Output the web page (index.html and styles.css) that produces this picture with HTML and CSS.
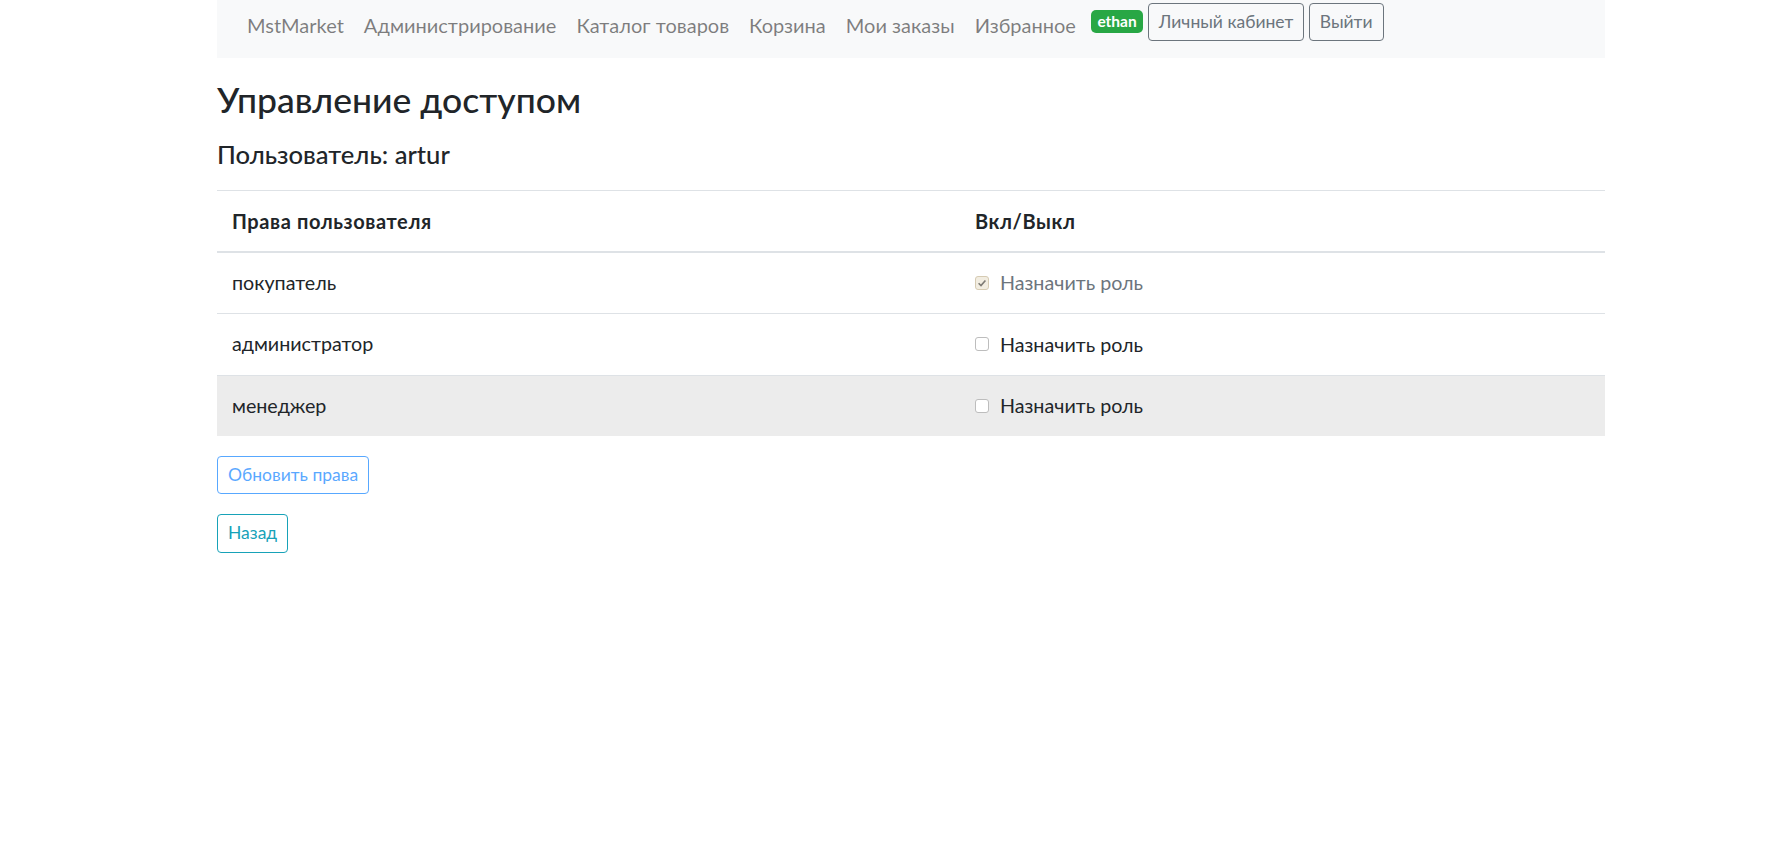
FILE: index.html
```html
<!DOCTYPE html>
<html lang="ru">
<head>
<meta charset="utf-8">
<title>Управление доступом</title>
<link rel="stylesheet" href="styles.css">
</head>
<body>
<div class="page">
  <nav class="navbar">
    <a class="nav-link" href="#">MstMarket</a>
    <a class="nav-link" href="#">Администрирование</a>
    <a class="nav-link" href="#">Каталог товаров</a>
    <a class="nav-link" href="#">Корзина</a>
    <a class="nav-link" href="#">Мои заказы</a>
    <a class="nav-link" href="#">Избранное</a>
    <span class="badge">ethan</span>
    <a class="btn btn-sm btn-outline-secondary" href="#">Личный кабинет</a>
    <a class="btn btn-sm btn-outline-secondary" href="#">Выйти</a>
  </nav>
  <main class="content">
    <h2 class="title">Управление доступом</h2>
    <h4 class="subtitle">Пользователь: artur</h4>
    <form class="roles-form">
      <table class="table">
        <thead>
          <tr><th class="col-name">Права пользователя</th><th>Вкл/Выкл</th></tr>
        </thead>
        <tbody>
          <tr>
            <td>покупатель</td>
            <td><label class="check disabled"><span class="box checked"><svg viewBox="0 0 14 14" width="14" height="14"><path d="M3.6 7.2 L6 9.6 L10.4 4.4" fill="none" stroke="#7d7a74" stroke-width="1.6"/></svg></span>Назначить роль</label></td>
          </tr>
          <tr>
            <td>администратор</td>
            <td><label class="check"><span class="box"></span>Назначить роль</label></td>
          </tr>
          <tr class="hover">
            <td>менеджер</td>
            <td><label class="check"><span class="box"></span>Назначить роль</label></td>
          </tr>
        </tbody>
      </table>
      <button class="btn btn-sm btn-outline-primary" type="button" disabled>Обновить права</button>
    </form>
    <a class="btn btn-sm btn-outline-info" href="#">Назад</a>
  </main>
</div>
</body>
</html>
```

FILE: styles.css
```css
* { box-sizing: border-box; }
body {
  margin: 0;
  font-family: "Lato", "Open Sans", sans-serif;
  font-size: 19.7px;
  line-height: 30px;
  color: #212529;
  background: #fff;
}
.page {
  margin-left: 217px;
  width: 1388px;
}
.navbar {
  display: flex;
  align-items: flex-start;
  height: 57.6px;
  padding: 0 20px;
  background: #f8f9fa;
}
.nav-link {
  padding: 10px 10px 0;
  font-size: 20px;
  color: rgba(0,0,0,.5);
  text-decoration: none;
  line-height: 30px;
}
.badge {
  display: inline-block;
  margin: 10px 5px 0 5.5px;
  padding: 3.75px 6px;
  font-size: 15.5px;
  font-weight: 700;
  line-height: 1;
  color: #fff;
  background: #28a745;
  border-radius: 5px;
}
.btn {
  display: inline-block;
  border: 1px solid transparent;
  background: transparent;
  text-decoration: none;
  font-family: inherit;
  cursor: pointer;
}
.btn-sm {
  padding: 5px 10px;
  font-size: 17.5px;
  line-height: 26.25px;
  border-radius: 4px;
}
.navbar .btn { margin-top: 3.4px; height: 37.4px; padding-top: 4.5px; }
.navbar .btn + .btn { margin-left: 4.5px; }
.btn-outline-secondary { color: #6c757d; border-color: #6c757d; }
.btn-outline-primary { color: #007bff; border-color: #007bff; }
.btn-outline-primary:disabled { opacity: .65; cursor: default; }
.btn-outline-info { color: #17a2b8; border-color: #17a2b8; }

.content { padding-top: 18px; }
.title {
  margin: 0 0 12px;
  font-size: 35.5px;
  font-weight: 500;
  line-height: 48px;
}
.subtitle {
  margin: 0 0 18px;
  font-size: 25.6px;
  font-weight: 500;
  line-height: 36px;
}
.roles-form { margin-bottom: 20px; }
.table {
  width: 100%;
  border-collapse: collapse;
  margin-bottom: 20px;
}
.table th, .table td {
  padding: 15px;
  text-align: left;
  vertical-align: top;
  border-top: 1px solid #dee2e6;
}
.table thead th {
  font-size: 20px;
  font-weight: 700;
  letter-spacing: .6px;
  border-bottom: 2px solid #dee2e6;
}
.col-name { width: 743px; }
.table tr.hover td { background: #ececec; }
.check {
  display: inline-flex;
  align-items: center;
}
.check.disabled { color: #6c757d; }
.box {
  display: inline-flex;
  width: 14px;
  height: 14px;
  margin: -1px 11px 0 0;
  border: 1px solid #bdbdbd;
  border-radius: 3px;
  background: #fff;
}
.box svg { display: block; margin: -1px; }
.box.checked {
  background: #f2ede1;
  border-color: #d6cbb3;
}
```
